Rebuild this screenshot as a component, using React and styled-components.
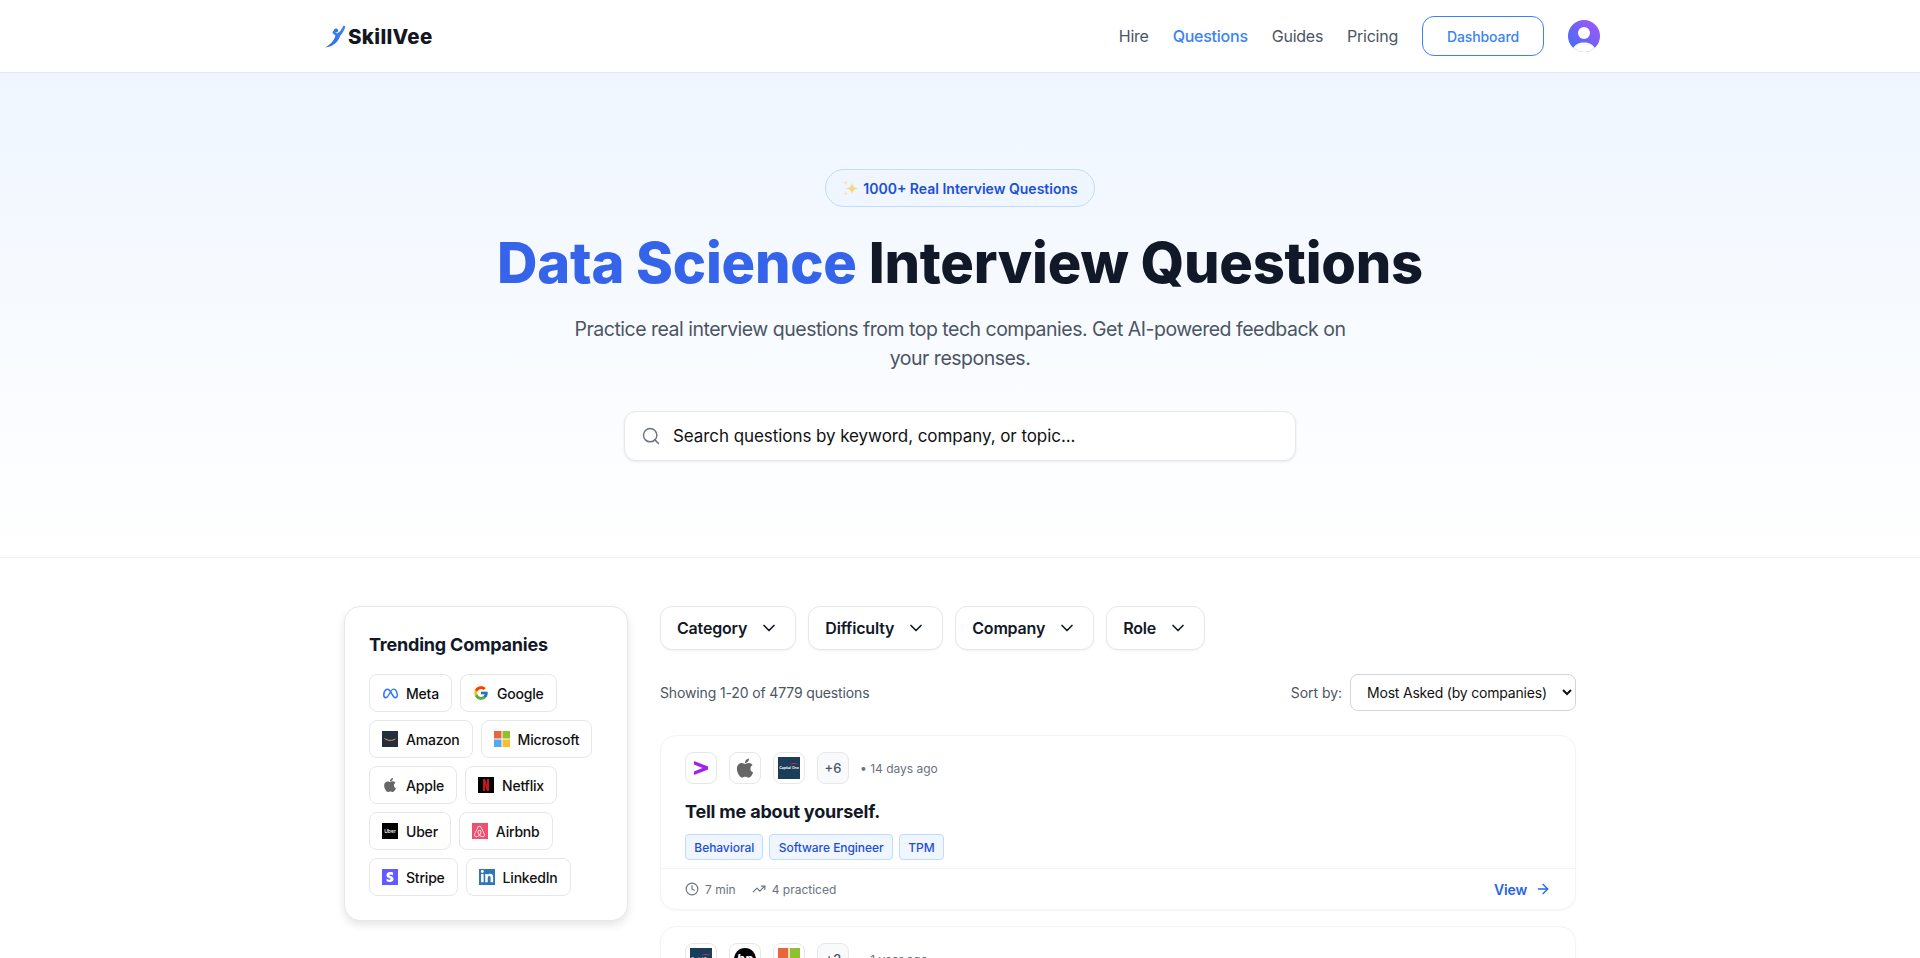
import React from "react";
import styled, { createGlobalStyle } from "styled-components";
import { FcGoogle } from "react-icons/fc";
import { FaApple, FaAirbnb, FaLinkedinIn, FaStripeS } from "react-icons/fa";
import { FaMeta } from "react-icons/fa6";
import { Search, ChevronDown, Clock, TrendingUp, ArrowRight } from "lucide-react";

const Global = createGlobalStyle`
  html, body { margin: 0; padding: 0; height: 100%; overflow: hidden; background: #fff; }
  body { font-family: Inter, "Liberation Sans", sans-serif; color: #111827; -webkit-font-smoothing: antialiased; }
  * { box-sizing: border-box; }
`;

const Page = styled.div`height: 958px; overflow: hidden;`;

const Header = styled.header`
  height: 73px; background: #fff; border-bottom: 1px solid #e5e7eb;
`;
const HeaderInner = styled.div`
  width: 1280px; height: 72px; margin: 0 auto; display: flex; align-items: center; justify-content: space-between;
`;
const Logo = styled.div`display: flex; align-items: center; gap: 2px; padding-left: 5px;`;
const LogoText = styled.span`
  font-size: 20.5px; font-weight: 800; letter-spacing: 0.3px; color: #14171f;
`;
const Nav = styled.nav`display: flex; align-items: center; gap: 24px;`;
const NavLink = styled.a`
  font-size: 16px; letter-spacing: -0.25px; font-weight: ${p => (p.$active ? 500 : 400)}; color: ${p => (p.$active ? "#3b82f6" : "#4b5563")};
`;
const DashButton = styled.button`
  width: 122px; height: 40px; border: 1px solid #3b82f6; border-radius: 12px; background: #fff;
  color: #3b82f6; font: 500 14px Inter, sans-serif; letter-spacing: -0.1px;
`;

const Hero = styled.section`
  height: 485px; padding-top: 96px; display: flex; flex-direction: column; align-items: center;
  background: linear-gradient(180deg, #eff6ff 0%, #ffffff 100%); border-bottom: 1px solid #f3f4f6;
`;
const Badge = styled.div`
  height: 38px; width: 270px; display: flex; align-items: center; justify-content: center; gap: 4px;
  border: 1px solid #bfdbfe; border-radius: 19px; background: #eff6ff;
  color: #1d4ed8; font-size: 14px; font-weight: 600;
`;
const Title = styled.h1`
  margin: 20px 0 0; font-size: 56px; line-height: 72px; font-weight: 800; letter-spacing: -0.25px; color: #111827;
`;
const Accent = styled.span`color: #3563e9;`;
const Subtitle = styled.p`
  margin: 16px 0 0; width: 780px; text-align: center; font-size: 19.5px; line-height: 29px; letter-spacing: -0.5px; color: #4b5563; font-weight: 400;
`;
const SearchBox = styled.div`
  margin-top: 38px; width: 672px; height: 50px; border: 1px solid #e5e7eb; border-radius: 12px; background: #fff;
  display: flex; align-items: center; padding-left: 16px; gap: 12px; box-shadow: 0 1px 3px rgba(0,0,0,.08); color: #6b7280;
`;
const SearchText = styled.span`font-size: 17px; letter-spacing: -0.07px; color: #111;`;

const Main = styled.main`
  width: 1232px; margin: 0 auto; padding-top: 48px; display: grid; grid-template-columns: 284px 916px; gap: 32px; align-items: start;
`;
const Sidebar = styled.aside`
  height: 315px; padding: 24px; background: #fff; border: 1px solid #e5e7eb; border-radius: 16px;
  box-shadow: 0 4px 8px rgba(0,0,0,.1);
`;
const SideTitle = styled.h2`margin: 0 0 15px; font-size: 18px; line-height: 28px; font-weight: 650; letter-spacing: -0.2px; color: #111827;`;
const ChipWrap = styled.div`display: flex; flex-wrap: wrap; gap: 8px;`;
const Chip = styled.div`
  height: 38px; padding: 0 12px; display: flex; align-items: center; gap: 8px;
  border: 1px solid #e5e7eb; border-radius: 8px; background: #fff; font-size: 14px; font-weight: 500; letter-spacing: -0.2px; color: #111;
`;
const Mark = styled.span`
  width: 16px; height: 16px; flex: none; display: flex; align-items: center; justify-content: center; overflow: hidden;
  background: ${p => p.$bg || "transparent"}; color: ${p => p.$fg || "#fff"};
`;
const TinyWord = styled.span`font-size: 5px; font-weight: 500; line-height: 1; letter-spacing: 0;`;

const Content = styled.div`display: flex; flex-direction: column;`;
const Filters = styled.div`display: flex; gap: 12px;`;
const FilterButton = styled.button`
  height: 44px; padding: 0 16px; display: flex; align-items: center; gap: 12px; background: #fff;
  border: 1px solid #e5e7eb; border-radius: 12px; box-shadow: 0 1px 2px rgba(0,0,0,.05);
  font: 600 16px Inter, sans-serif; letter-spacing: -0.18px; color: #111827;
`;
const SortRow = styled.div`margin-top: 24px; height: 37px; display: flex; align-items: center; justify-content: space-between;`;
const Showing = styled.span`font-size: 14px; letter-spacing: -0.14px; color: #4b5563;`;
const SortBy = styled.label`display: flex; align-items: center; gap: 8px; font-size: 14px; letter-spacing: -0.05px; color: #4b5563;`;
const Select = styled.select`
  width: 226px; height: 37px; padding: 0 4px 0 12px; border: 1px solid #d1d5db; border-radius: 8px; background: #fff;
  font: 400 14px Inter, sans-serif; letter-spacing: -0.2px; color: #111;
`;
const Card = styled.article`
  margin-top: ${p => p.$mt}px; background: #fff; border: 1px solid #f3f4f6; border-radius: 16px; box-shadow: 0 1px 2px rgba(0,0,0,.04);
`;
const CardTop = styled.div`padding: 16px 24px 8px;`;
const LogoRow = styled.div`display: flex; align-items: center; gap: 12px;`;
const Tile = styled.span`
  width: 32px; height: 32px; display: flex; align-items: center; justify-content: center; overflow: hidden;
  border: 1px solid #e5e7eb; border-radius: 8px; background: ${p => p.$bg || "#fff"}; font-size: 13px; font-weight: 500; color: #4b5563;
`;
const Ago = styled.span`font-size: 12px; color: #6b7280; margin-left: -1px;`;
const CardTitle = styled.h3`margin: 14px 0 0; font-size: 18px; line-height: 28px; font-weight: 650; letter-spacing: -0.2px; color: #111827;`;
const Tags = styled.div`margin-top: 8px; display: flex; gap: 6px;`;
const Tag = styled.span`
  height: 26px; padding: 0 8.3px; display: flex; align-items: center; background: #eff6ff; border: 1px solid #bfdbfe; border-radius: 4px;
  font-size: 12px; font-weight: 500; letter-spacing: -0.05px; color: #1d4ed8;
`;
const CardFooter = styled.div`
  height: 41px; padding: 0 24px; border-top: 1px solid #f3f4f6; display: flex; align-items: center; justify-content: space-between;
`;
const Stats = styled.div`display: flex; align-items: center; gap: 16px;`;
const Stat = styled.span`display: flex; align-items: center; gap: 6px; font-size: 12px; color: #6b7280;`;
const ViewLink = styled.a`display: flex; align-items: center; gap: 8px; font-size: 14px; font-weight: 600; letter-spacing: -0.15px; color: #2563eb;`;
const CapBox = styled.span`
  position: relative; width: 22px; height: 22px; background: #1c3d5a; display: flex; align-items: center; justify-content: center; overflow: hidden;
`;
const CapWord = styled.span`font-size: 3.5px; color: #fff; font-weight: 600; white-space: nowrap;`;
const CapSwoosh = styled.span`
  position: absolute; top: 6px; right: 2px; width: 8px; height: 3px; border-top: 1px solid #d03027; border-radius: 50%;
`;
const HpBadge = styled.span`
  width: 22px; height: 22px; border-radius: 50%; background: #000; color: #fff; display: flex; align-items: center; justify-content: center;
  font-size: 13px; font-weight: 700; font-style: italic; line-height: 1;
`;

const LogoMark = () => (
  <svg width="21" height="24" viewBox="0 0 21 24">
    <defs><linearGradient id="lg" x1="0" y1="1" x2="1" y2="0"><stop offset="0" stopColor="#2f6fe0" /><stop offset="1" stopColor="#3b82f6" /></linearGradient></defs>
    <circle cx="11" cy="6.500" r="2.100" fill="#2f74e4" />
    <path d="M0 23.500C5 21 9 17 10.500 11.500 L7.500 9 L8 6.500 L12 9.500 C14.500 8.500 17 5 18.500 1.500 L20.500 2.500 C19 7 16.500 10.500 15 12 C14 17 8 23 0 23.500Z" fill="url(#lg)" />
  </svg>
);
const Avatar = () => (
  <svg width="32" height="32" viewBox="0 0 32 32">
    <defs><linearGradient id="av" x1="0" y1="1" x2="1" y2="0"><stop offset="0" stopColor="#3b6ff5" /><stop offset="1" stopColor="#a855f7" /></linearGradient>
    <clipPath id="avc"><circle cx="16" cy="16" r="16" /></clipPath></defs>
    <circle cx="16" cy="16" r="16" fill="url(#av)" />
    <circle cx="16" cy="13" r="6" fill="#fff" />
    <path d="M4 32c1-7 6-9.500 12-9.500S27 25 28 32Z" fill="#fff" clipPath="url(#avc)" />
  </svg>
);
const Sparkle = () => (
  <svg width="17" height="17" viewBox="0 0 17 17">
    <path d="M10 2.500c.7 4 2.100 5.400 7 6-4.900.6-6.300 2-7 6-.7-4-2.100-5.400-7-6 4.900-.6 6.300-2 7-6Z" fill="#f9d77e" />
    <path d="M3.500 0c.3 1.800.9 2.400 2.500 2.700-1.600.3-2.200.9-2.500 2.700C3.200 3.600 2.600 3 1 2.700 2.600 2.400 3.200 1.800 3.500 0Z" fill="#f9e3a6" />
    <path d="M3.500 11c.3 1.600.8 2.100 2.300 2.500-1.500.4-2 .9-2.300 2.500-.3-1.600-.8-2.100-2.300-2.500 1.500-.4 2-.9 2.300-2.500Z" fill="#f9e3a6" />
  </svg>
);
const MsLogo = ({ size = 16 }) => (
  <svg width={size} height={size} viewBox="0 0 16 16">
    <rect width="7.500" height="7.500" fill="#e8663c" /><rect x="8.500" width="7.500" height="7.500" fill="#8fc12f" />
    <rect y="8.500" width="7.500" height="7.500" fill="#4fabf0" /><rect x="8.500" y="8.500" width="7.500" height="7.500" fill="#fcbc2c" />
  </svg>
);
const AmazonLogo = () => (
  <svg width="16" height="16" viewBox="0 0 16 16">
    <rect width="16" height="16" fill="#232f3e" />
    <path d="M2.500 7.500c3.500 2.500 8 2.500 11 .3" stroke="#f59e2c" strokeWidth="1" fill="none" />
  </svg>
);
const NetflixLogo = () => (
  <svg width="16" height="16" viewBox="0 0 16 16">
    <rect width="16" height="16" fill="#000" />
    <path d="M5 2h2.200l3.800 12H8.800ZM5 2h2v12l-2 .3ZM9 2h2v12l-2-.3Z" fill="#c4161c" />
  </svg>
);
const AccentureLogo = () => (
  <svg width="16" height="16" viewBox="0 0 16 16"><path d="M1 1 15 6.500V9.500L1 15V11.500L9.500 8 1 4.500Z" fill="#a020f0" /></svg>
);
const CapitalOne = () => (
  <CapBox><CapWord>Capital One</CapWord><CapSwoosh /></CapBox>
);

const companies = [
  ["Meta", <Mark key="m" $fg="#2f7bf6"><FaMeta size={15} /></Mark>],
  ["Google", <Mark key="g"><FcGoogle size={16} /></Mark>],
  ["Amazon", <Mark key="a"><AmazonLogo /></Mark>],
  ["Microsoft", <Mark key="ms"><MsLogo /></Mark>],
  ["Apple", <Mark key="ap" $fg="#666"><FaApple size={16} /></Mark>],
  ["Netflix", <Mark key="n"><NetflixLogo /></Mark>],
  ["Uber", <Mark key="u" $bg="#000"><TinyWord>Uber</TinyWord></Mark>],
  ["Airbnb", <Mark key="ab" $bg="#f0506e"><FaAirbnb size={13} /></Mark>],
  ["Stripe", <Mark key="s" $bg="#635bff"><FaStripeS size={10} /></Mark>],
  ["LinkedIn", <Mark key="l" $bg="#2f77b5"><FaLinkedinIn size={14} /></Mark>],
];

export default function App() {
  return (
    <Page>
      <Global />
      <Header>
        <HeaderInner>
          <Logo><LogoMark /><LogoText>SkillVee</LogoText></Logo>
          <Nav>
            <NavLink>Hire</NavLink>
            <NavLink $active>Questions</NavLink>
            <NavLink>Guides</NavLink>
            <NavLink>Pricing</NavLink>
            <DashButton>Dashboard</DashButton>
            <Avatar />
          </Nav>
        </HeaderInner>
      </Header>
      <Hero>
        <Badge><Sparkle />1000+ Real Interview Questions</Badge>
        <Title><Accent>Data Science</Accent> Interview Questions</Title>
        <Subtitle>Practice real interview questions from top tech companies. Get AI-powered feedback on your responses.</Subtitle>
        <SearchBox>
          <Search size={20} strokeWidth={1.75} />
          <SearchText>Search questions by keyword, company, or topic...</SearchText>
        </SearchBox>
      </Hero>
      <Main>
        <Sidebar>
          <SideTitle>Trending Companies</SideTitle>
          <ChipWrap>
            {companies.map(([name, icon]) => <Chip key={name}>{icon}{name}</Chip>)}
          </ChipWrap>
        </Sidebar>
        <Content>
          <Filters>
            {["Category", "Difficulty", "Company", "Role"].map(f => (
              <FilterButton key={f}>{f}<ChevronDown size={20} /></FilterButton>
            ))}
          </Filters>
          <SortRow>
            <Showing>Showing 1-20 of 4779 questions</Showing>
            <SortBy>Sort by:
              <Select defaultValue="most"><option value="most">Most Asked (by companies)</option></Select>
            </SortBy>
          </SortRow>
          <Card $mt={24}>
            <CardTop>
              <LogoRow>
                <Tile><AccentureLogo /></Tile>
                <Tile><FaApple size={22} color="#666" /></Tile>
                <Tile><CapitalOne /></Tile>
                <Tile $bg="#f9fafb">+6</Tile>
                <Ago>• 14 days ago</Ago>
              </LogoRow>
              <CardTitle>Tell me about yourself.</CardTitle>
              <Tags><Tag>Behavioral</Tag><Tag>Software Engineer</Tag><Tag>TPM</Tag></Tags>
            </CardTop>
            <CardFooter>
              <Stats>
                <Stat><Clock size={14} />7 min</Stat>
                <Stat><TrendingUp size={14} />4 practiced</Stat>
              </Stats>
              <ViewLink>View<ArrowRight size={16} /></ViewLink>
            </CardFooter>
          </Card>
          <Card $mt={16}>
            <CardTop>
              <LogoRow>
                <Tile><CapitalOne /></Tile>
                <Tile><HpBadge>hp</HpBadge></Tile>
                <Tile><MsLogo size={22} /></Tile>
                <Tile $bg="#f9fafb">+2</Tile>
                <Ago>• 1 year ago</Ago>
              </LogoRow>
            </CardTop>
          </Card>
        </Content>
      </Main>
    </Page>
  );
}
